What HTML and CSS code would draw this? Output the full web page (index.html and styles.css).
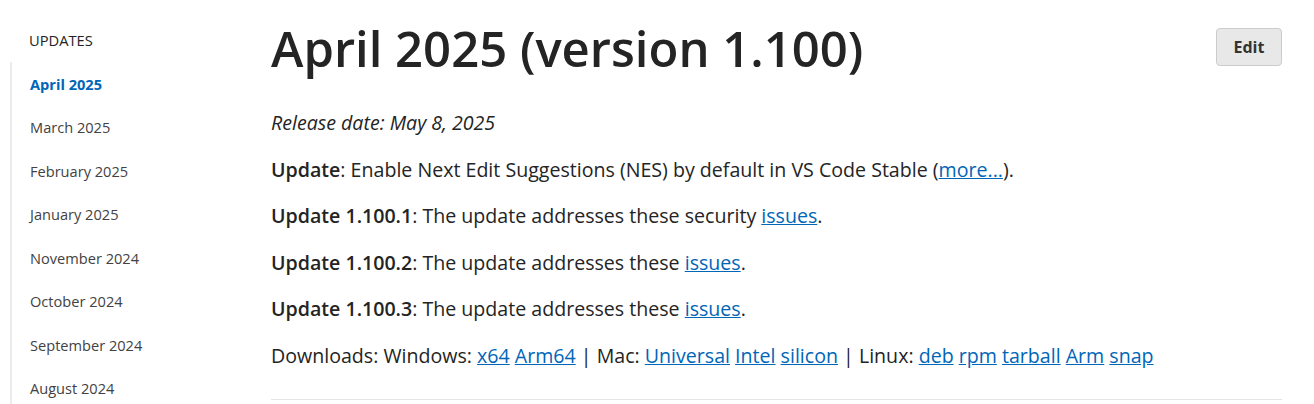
FILE: index.html
```html
<!DOCTYPE html>
<html lang="en">
<head>
<meta charset="utf-8">
<title>April 2025 (version 1.100)</title>
<link rel="stylesheet" href="styles.css">
</head>
<body>
<div class="page">
  <nav class="sidebar">
    <div class="side-title">UPDATES</div>
    <ul class="side-list">
      <li class="active"><a href="#">April 2025</a></li>
      <li><a href="#">March 2025</a></li>
      <li><a href="#">February 2025</a></li>
      <li><a href="#">January 2025</a></li>
      <li><a href="#">November 2024</a></li>
      <li><a href="#">October 2024</a></li>
      <li><a href="#">September 2024</a></li>
      <li><a href="#">August 2024</a></li>
    </ul>
  </nav>
  <main class="content">
    <div class="head-row">
      <h1 class="title">April 2025 (version 1.100)</h1>
      <button class="edit-btn">Edit</button>
    </div>
    <p class="release"><em>Release date: May 8, 2025</em></p>
    <p class="line"><strong>Update</strong>: Enable Next Edit Suggestions (NES) by default in VS Code Stable (<a href="#">more...</a>).</p>
    <p class="line"><strong>Update 1.100.1</strong>: The update addresses these security <a href="#">issues</a>.</p>
    <p class="line"><strong>Update 1.100.2</strong>: The update addresses these <a href="#">issues</a>.</p>
    <p class="line"><strong>Update 1.100.3</strong>: The update addresses these <a href="#">issues</a>.</p>
    <p class="line downloads">Downloads: Windows: <a href="#">x64</a> <a href="#">Arm64</a> | Mac: <a href="#">Universal</a> <a href="#">Intel</a> <a href="#">silicon</a> | Linux: <a href="#">deb</a> <a href="#">rpm</a> <a href="#">tarball</a> <a href="#">Arm</a> <a href="#">snap</a></p>
    <hr class="rule">
  </main>
</div>
</body>
</html>
```
FILE: styles.css
```css
html, body {
  margin: 0;
  padding: 0;
  background: #ffffff;
}
body {
  font-family: "Open Sans", "Noto Sans", "Liberation Sans", sans-serif;
  color: #242424;
}
.page {
  display: flex;
  padding: 0 32px 0 10px;
}
.sidebar {
  width: 261px;
  flex: none;
  padding-top: 31px;
}
.side-title {
  font-size: 14.7px;
  color: #242424;
  padding-left: 19px;
  height: 31px;
  line-height: 18px;
}
.side-list {
  list-style: none;
  margin: 0;
  padding: 0;
  border-left: 2px solid #ebebeb;
}
.side-list li {
  height: 43.5px;
  display: flex;
  align-items: center;
  padding-left: 18px;
}
.side-list a {
  font-size: 14.6px;
  color: #424242;
  text-decoration: none;
}
.side-list .active a {
  color: #0066b8;
  font-weight: 700;
}
.content {
  flex: 1;
  min-width: 0;
}
.head-row {
  display: flex;
  justify-content: space-between;
  align-items: flex-start;
  padding-top: 18px;
}
.title {
  margin: 0;
  font-size: 49px;
  line-height: 60px;
  font-weight: 600;
  color: #242424;
}
.edit-btn {
  margin-top: 10px;
  width: 66px;
  height: 38px;
  border: 1px solid #cccccc;
  border-radius: 4px;
  background: #e8e8e8;
  font-family: inherit;
  font-size: 16px;
  font-weight: 700;
  color: #333333;
}
.release {
  margin: 32px 0 0;
  font-size: 19.6px;
  line-height: 26.5px;
}
.line {
  margin: 20px 0 0;
  font-size: 19.6px;
  line-height: 26.5px;
}
.line strong {
  font-weight: 600;
}
.line a {
  color: #0066b8;
  text-decoration: underline;
}
.rule {
  margin: 30px 0 0;
  border: none;
  border-top: 1px solid #e5e5e5;
}
```
